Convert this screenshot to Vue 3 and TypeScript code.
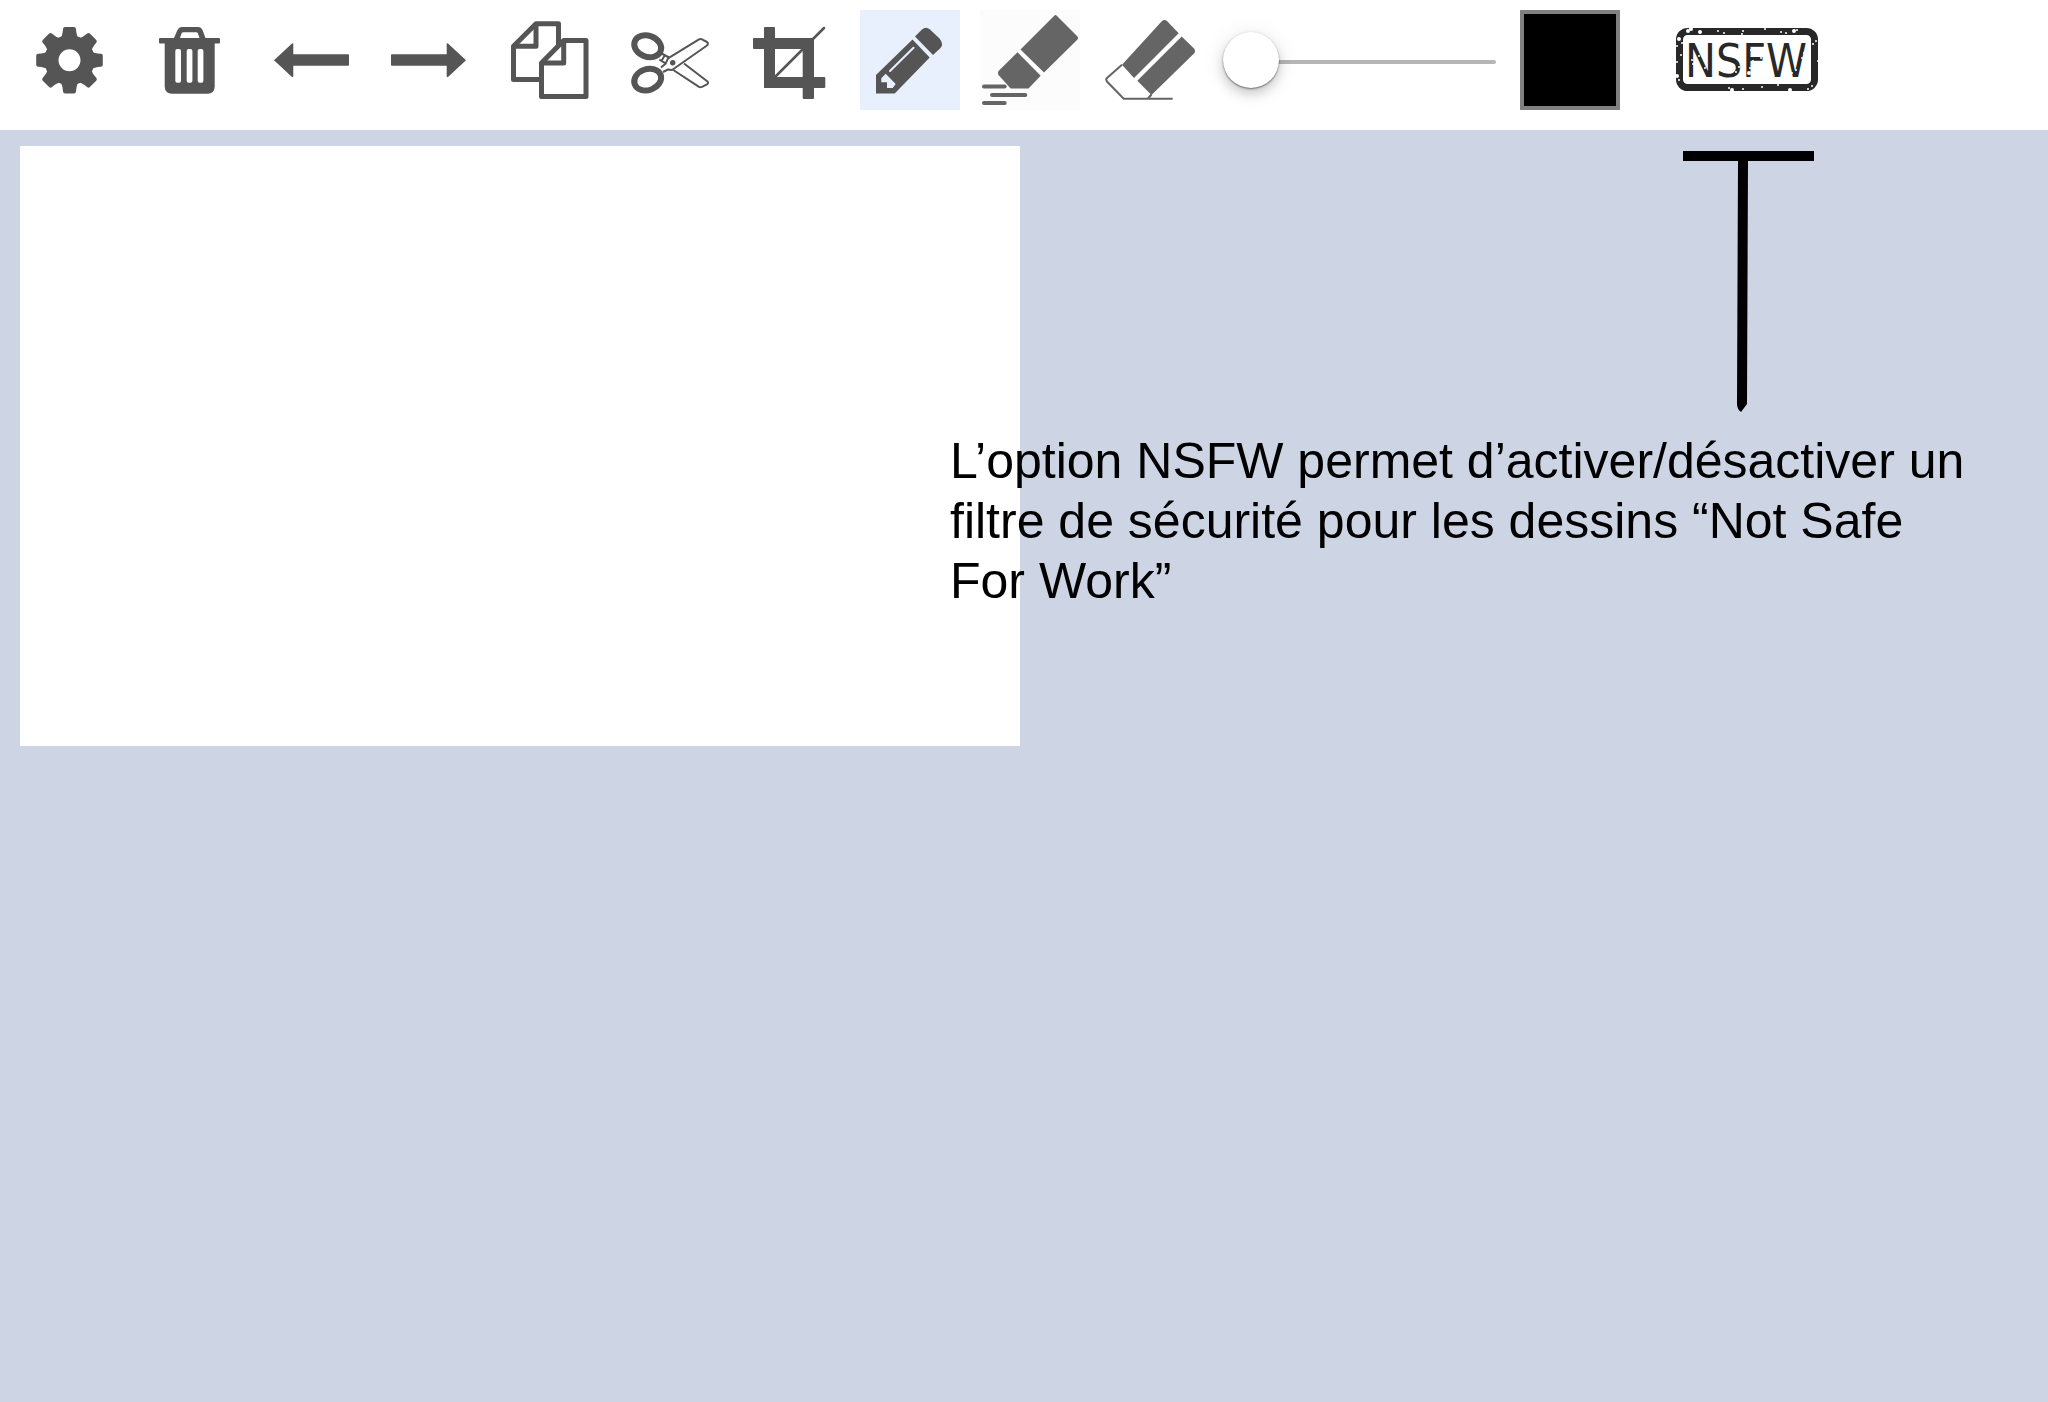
<script setup lang="ts">
import { computed, ref } from 'vue'

type Tool = 'pencil' | 'marker' | 'eraser'

const tool = ref<Tool>('pencil')
const size = ref(1)
const color = ref('#000000')
const nsfw = ref(false)
const teeth = computed(() => Array.from({ length: 8 }, (_, i) => i * 45))

// Worn-ink spots of the stamp: x, y, radius
const specks: [number, number, number][] = [
  [48, 21, 2], [51, 19, 2], [60, 22, 2], [59, 26, 1], [39, 29, 2], [37, 36, 1], [42, 33, 1], [41, 45, 1],
  [37, 52, 1], [37, 66, 2], [39, 70, 1], [78, 21, 1], [84, 23, 1], [103, 21, 1], [102, 24, 1],
  [125, 19, 1], [141, 22, 1], [146, 23, 1], [154, 21, 2], [157, 20, 1], [173, 34, 1], [176, 31, 1],
  [178, 51, 1], [92, 80, 2], [89, 78, 1], [103, 79, 1], [122, 77, 1], [138, 75, 1], [150, 80, 2],
  [168, 79, 1], [172, 76, 1], [52, 50, 1], [53, 54, 1], [59, 46, 1], [65, 58, 1], [60, 41, 1],
  [79, 59, 1], [96, 62, 1], [99, 57, 1], [93, 58, 1], [110, 58, 1], [113, 51, 1], [109, 63, 2],
  [121, 48, 1], [125, 46, 1], [111, 40, 1], [152, 63, 1], [156, 60, 1], [162, 48, 1], [164, 43, 1],
]
</script>

<template>
  <div class="app">
    <header class="toolbar">
      <button class="tool" type="button" aria-label="Paramètres">
        <svg viewBox="0 0 100 100">
          <circle cx="49.5" cy="50.3" r="18" fill="none" stroke="#555" stroke-width="14" />
          <path
            v-for="angle in teeth"
            :key="angle"
            :transform="`rotate(${angle} 49.5 50.3)`"
            d="M40.5 28 Q42.5 26 43 19 Q43.2 17 45 17 H54 Q55.8 17 56 19 Q56.5 26 58.5 28 L58 34 H41Z"
          />
        </svg>
      </button>
      <button class="tool" type="button" aria-label="Supprimer">
        <svg viewBox="0 0 100 100">
          <path
            fill-rule="evenodd"
            d="M20 28H34L37.5 20Q39 17 42 17H58Q61 17 62.5 20L65.5 28H79Q80 28 80 29V32.5Q80 33.5 79 33.5H74.7V76.5Q74.5 83.7 67.5 83.7H32Q25 83.500 24.7 76.5V33.5H20Q19 33.5 19 32.5V29Q19 28 20 28ZM40 28H59.5L58 23.5Q57.5 22.3 56 22.3H43.5Q42 22.3 41.5 23.5Z"
          />
          <g fill="#fff">
            <rect x="35.3" y="39" width="5.7" height="33.7" rx="2" />
            <rect x="46.7" y="39" width="5.7" height="33.7" rx="2" />
            <rect x="57.7" y="39" width="5.7" height="33.7" rx="2" />
          </g>
        </svg>
      </button>
      <button class="tool" type="button" aria-label="Annuler">
        <svg viewBox="0 0 100 100">
          <path d="M14 50.2 32 33.5Q33.3 33 33.3 34V44.3H88Q89 44.3 89 45.3V54.7Q89 55.7 88 55.7H33.3V66Q33.3 67.5 32 67Z" />
        </svg>
      </button>
      <button class="tool" type="button" aria-label="Rétablir">
        <svg viewBox="0 0 100 100">
          <path d="M86 50.2 68 33.5Q66.7 33 66.7 34V44.3H12Q11 44.3 11 45.3V54.7Q11 55.7 12 55.7H66.7V66Q66.7 67.5 68 67Z" />
        </svg>
      </button>
      <button class="tool" type="button" aria-label="Copier">
        <svg viewBox="0 0 100 100">
          <g fill="#fff" stroke="#555" stroke-width="5" stroke-linejoin="round">
            <path d="M13.5 36.3 36 13.7H58.5V69.5H13.5Z" />
            <path d="M13.5 36.3H36V13.7" fill="none" />
            <path d="M41.5 53 63.7 30.6H86V86.5H41.5Z" />
            <path d="M41.5 53H63.7V30.6" fill="none" />
          </g>
        </svg>
      </button>
      <button class="tool" type="button" aria-label="Couper">
        <svg viewBox="0 0 100 100">
          <g fill="none" stroke="#555" stroke-width="2" stroke-linejoin="round">
            <path d="M41.7 43.5 49 47.5M39.3 49.5 45.5 53.3M45 45 42 50" />
            <path d="M53.3 60 79 76.8Q80.5 77.5 82 76.8L87 74.3Q88.8 73 87.5 71.5L64 53.5" />
            <path d="M43 62 48 59.5 52 60 87 35.5Q88.8 33.5 87 32L82 29.3Q80.5 28.5 79 29.3L48 48.3 45.5 53.8 41 57.5" />
            <ellipse cx="27.7" cy="36.3" rx="13.8" ry="10.5" transform="rotate(20 27.7 36.3)" stroke-width="6" />
            <ellipse cx="27.7" cy="69.6" rx="13.8" ry="10.5" transform="rotate(-20 27.7 69.6)" stroke-width="6" />
          </g>
          <circle cx="52.7" cy="52.7" r="2.7" />
        </svg>
      </button>
      <button class="tool" type="button" aria-label="Recadrer">
        <svg viewBox="0 0 100 100">
          <path
            fill-rule="evenodd"
            d="M25 17H34Q35 17 35 18V28H74V67H84Q85.3 67 85.3 68V77Q85.3 78 84 78H74V88Q74 89 73 89H64Q62.7 89 62.7 88V78H24V39H14Q13 39 13 38V29Q13 28 14 28H24V18Q24 17 25 17ZM35 39V67H62.7V39Z"
          />
          <path d="M35 67 84 18" stroke="#555" stroke-width="2.5" stroke-linecap="round" />
        </svg>
      </button>
      <button
        class="tool"
        :class="{ active: tool === 'pencil' }"
        type="button"
        aria-label="Crayon"
        :aria-pressed="tool === 'pencil'"
        @click="tool = 'pencil'"
      >
        <svg viewBox="0 0 100 100">
          <path d="M55 26.5 62 19.5Q66 16 70 19.5L79.5 28.5Q84 34 80.5 38L73 45Z" />
          <path d="M52.5 29.5 69.7 47.5 34.7 83.5H16V65Z" />
          <path d="M30 61 53.5 37.8" stroke="#e8f0fe" stroke-width="2" stroke-linecap="round" />
          <path d="M25.7 63.7 21.3 68.3V72.3H27V78H32.7L35.7 74Z" fill="#e8f0fe" />
        </svg>
      </button>
      <button
        class="tool textured"
        :class="{ active: tool === 'marker' }"
        type="button"
        aria-label="Marqueur"
        :aria-pressed="tool === 'marker'"
        @click="tool = 'marker'"
      >
        <svg viewBox="0 0 100 100" fill="#656565">
          <path d="M40.5 39.5 74 6Q75.5 4 77 6L97.5 26.5Q98.8 28 97.5 29.5L64 62.5Z" />
          <path d="M37.5 42.3 60.7 65.7 48.5 78.5H30.7L18.5 65Q17.5 63 18.5 61Z" />
          <path d="M4 76.4H24.7M12 85H45.3M4 93H24.7" stroke="#656565" stroke-width="4" stroke-linecap="round" />
        </svg>
      </button>
      <button
        class="tool"
        :class="{ active: tool === 'eraser' }"
        type="button"
        aria-label="Gomme"
        :aria-pressed="tool === 'eraser'"
        @click="tool = 'eraser'"
      >
        <svg viewBox="0 0 100 100" fill="#656565">
          <path d="M22 54.7 62 11Q64.5 9 67 11L78.7 23.3 34 68Z" />
          <path d="M81.7 26.5 94 38.5Q96 41 94 43.5L51.5 85 37.3 70.7Z" />
          <path
            d="M22 54.7 7 68Q5.5 69.5 7 71.5L23.7 88.7H72.7M51.5 84.5 48 88.5"
            fill="none"
            stroke="#656565"
            stroke-width="2"
          />
        </svg>
      </button>
      <input v-model.number="size" class="size" type="range" min="1" max="50" aria-label="Taille du trait" />
      <input v-model="color" class="color" type="color" aria-label="Couleur" />
      <button class="tool stamp" type="button" aria-label="NSFW" :aria-pressed="nsfw" @click="nsfw = !nsfw">
        <svg viewBox="0 0 200 100">
          <rect x="39.5" y="21.5" width="135" height="56" rx="8" fill="none" stroke="#282828" stroke-width="7" />
          <text x="106" y="67" text-anchor="middle">NSFW</text>
          <circle v-for="([x, y, r], i) in specks" :key="i" :cx="x" :cy="y" :r="r" fill="#fff" />
        </svg>
      </button>
    </header>

    <main class="workspace">
      <canvas class="sheet" width="1000" height="600"></canvas>
      <section class="hint">
        <svg class="pointer" viewBox="0 0 131 261">
          <path d="M0 0H131V10H65L64 253 58 261Q54 258 54 253L55 10H0Z" fill="#000" />
        </svg>
        <p>L’option NSFW permet d’activer/désactiver un filtre de sécurité pour les dessins “Not Safe For Work”</p>
      </section>
    </main>
  </div>
</template>

<style>
body {
  background: #cdd4e4;
}
</style>

<style scoped>
.app {
  display: flex;
  flex-direction: column;
  min-height: 100vh;
  font-family: "Liberation Sans", Arial, sans-serif;
}

.toolbar {
  display: flex;
  align-items: center;
  gap: 20px;
  padding: 10px 20px 20px;
  background: #fff;
}

.tool {
  flex: none;
  width: 100px;
  height: 100px;
  padding: 0;
  border: 0;
  background: none;
  cursor: pointer;
}

.tool svg {
  display: block;
  width: 100%;
  height: 100%;
}

.tool svg:not([fill]) {
  fill: #555;
}

.tool.textured {
  background: #fcfcfc;
}

.tool.active {
  background: #e8f0fe;
}

.size {
  flex: none;
  width: 273px;
  height: 60px;
  margin: 4px 4px 0 3px;
  background: none;
  appearance: none;
}

.size::-webkit-slider-runnable-track {
  height: 4px;
  border-radius: 2px;
  background: #b6b6b6;
}

.size::-webkit-slider-thumb {
  width: 56px;
  height: 56px;
  margin-top: -28px;
  border: 0;
  border-radius: 50%;
  background: #fff;
  box-shadow: 0 1px 2px rgba(0, 0, 0, 0.5), 0 6px 12px rgba(0, 0, 0, 0.18), 0 2px 24px rgba(0, 0, 0, 0.08);
  appearance: none;
}

.color {
  box-sizing: border-box;
  flex: none;
  width: 100px;
  height: 100px;
  padding: 0;
  border: 4px solid #808080;
  background: #000;
  appearance: none;
}

.color::-webkit-color-swatch-wrapper {
  padding: 0;
}

.color::-webkit-color-swatch {
  border: 0;
}

.stamp {
  width: 200px;
}

.stamp text {
  fill: #282828;
  font: 46px "DejaVu Sans Condensed", "Arial Narrow", sans-serif;
}

.workspace {
  position: relative;
  flex: 1;
  padding: 16px 20px;
}

.sheet {
  display: block;
  background: #fff;
}

.hint {
  position: absolute;
  top: 21px;
  right: 68px;
  left: 950px;
  display: flex;
  flex-direction: column;
  gap: 19px;
}

.pointer {
  align-self: flex-end;
  width: 131px;
  height: 261px;
  margin-right: 166px;
}

.hint p {
  margin: 0;
  color: #000;
  font-size: 50px;
  line-height: 60px;
}
</style>
